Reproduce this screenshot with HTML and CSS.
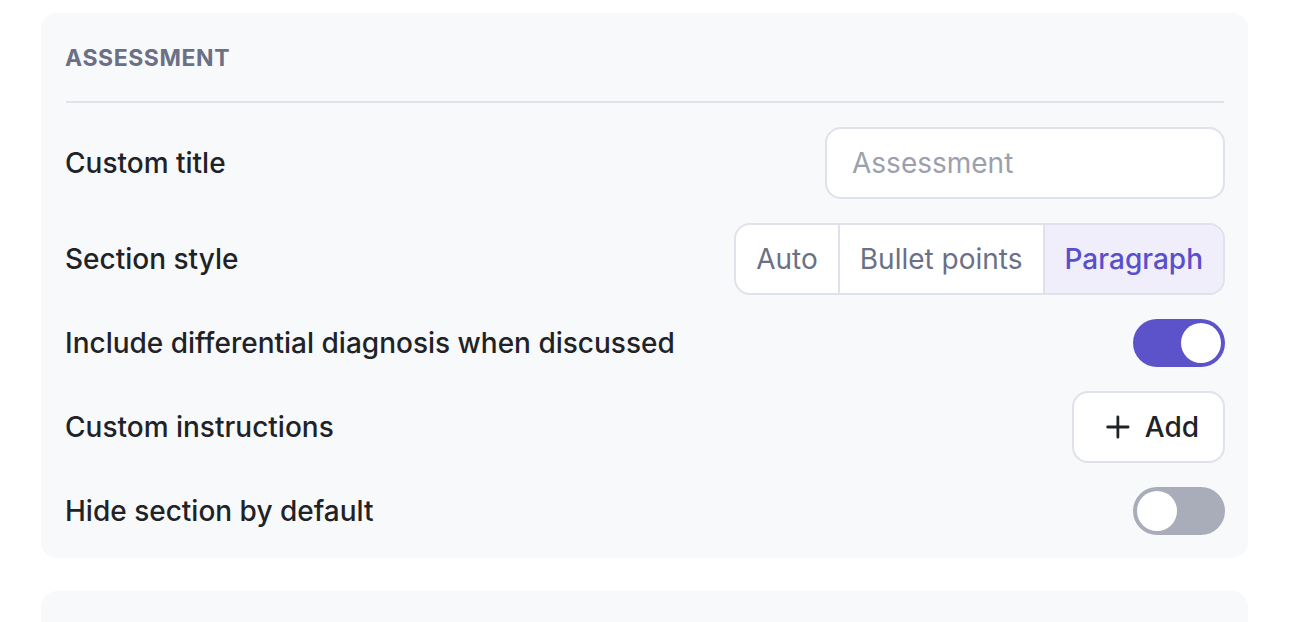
FILE: index.html
```html
<!DOCTYPE html>
<html>
<head>
<meta charset="utf-8">
<link rel="stylesheet" href="styles.css">
</head>
<body>
<div class="page">
  <section class="card">
    <div class="card-header">ASSESSMENT</div>
    <div class="rows">
      <div class="row">
        <span class="label">Custom title</span>
        <div class="input"><span class="placeholder">Assessment</span></div>
      </div>
      <div class="row">
        <span class="label">Section style</span>
        <div class="segmented">
          <span class="seg">Auto</span>
          <span class="seg">Bullet points</span>
          <span class="seg active">Paragraph</span>
        </div>
      </div>
      <div class="row">
        <span class="label">Include differential diagnosis when discussed</span>
        <span class="toggle on"><span class="knob"></span></span>
      </div>
      <div class="row">
        <span class="label">Custom instructions</span>
        <button class="add-btn">
          <svg class="plus" viewBox="0 0 32 32" width="32" height="32" aria-hidden="true">
            <path d="M16 5v22M5 16h22" stroke="#1f2328" stroke-width="3" stroke-linecap="round" fill="none"/>
          </svg>
          <span>Add</span>
        </button>
      </div>
      <div class="row">
        <span class="label">Hide section by default</span>
        <span class="toggle off"><span class="knob"></span></span>
      </div>
    </div>
  </section>
  <section class="card card-next"></section>
</div>
</body>
</html>
```
FILE: styles.css
```css
* { box-sizing: border-box; }

html, body {
  margin: 0;
  padding: 0;
  background: #ffffff;
  font-family: Inter, "Noto Sans", sans-serif;
  overflow: hidden;
}

.page {
  padding: 13px 0 0 41px;
  display: flex;
  flex-direction: column;
  gap: 33px;
}

.card {
  width: 1207px;
  background: #f8f9fb;
  border-radius: 16px;
  padding: 24px 23px 23px 24px;
}

.card-next {
  height: 120px;
}

.card-header {
  font-size: 23px;
  font-weight: 700;
  letter-spacing: 0.025em;
  color: #6b7086;
  line-height: 32px;
  padding: 5px 0 27px;
  border-bottom: 2px solid #e1e2ea;
  margin-left: 1px;
  margin-right: 1px;
  text-indent: -1px;
}

.rows {
  display: flex;
  flex-direction: column;
  gap: 24px;
  padding-top: 24px;
}

.row {
  display: flex;
  align-items: center;
  justify-content: space-between;
}

.label {
  font-size: 28px;
  font-weight: 500;
  color: #1f2328;
}

.input {
  width: 400px;
  height: 72px;
  background: #ffffff;
  border: 2px solid #e0e1ea;
  border-radius: 16px;
  display: flex;
  align-items: center;
  padding: 0 25px;
}

.placeholder {
  font-size: 28px;
  color: #9ca0ae;
}

.segmented {
  display: flex;
  height: 72px;
  border: 2px solid #e0e1ea;
  border-radius: 16px;
  overflow: hidden;
  background: #ffffff;
}

.seg {
  display: flex;
  align-items: center;
  padding: 0 20px;
  font-size: 28px;
  color: #6b7086;
}

.seg + .seg {
  border-left: 2px solid #e0e1ea;
}

.seg.active {
  background: #efeefa;
  color: #5a4fcb;
  font-weight: 500;
}

.toggle {
  width: 92px;
  height: 48px;
  border-radius: 24px;
  display: flex;
  align-items: center;
  padding: 0 4px;
}

.toggle.on {
  background: #5c52c9;
  justify-content: flex-end;
}

.toggle.off {
  background: #a8adb9;
  justify-content: flex-start;
}

.knob {
  width: 40px;
  height: 40px;
  border-radius: 50%;
  background: #ffffff;
}

.add-btn {
  height: 72px;
  width: 153px;
  background: #ffffff;
  border: 2px solid #e0e1ea;
  border-radius: 16px;
  display: flex;
  align-items: center;
  padding: 0 24px 0 29px;
  gap: 12px;
  font-family: Inter, "Noto Sans", sans-serif;
  font-size: 28px;
  font-weight: 500;
  color: #1f2328;
}
```
